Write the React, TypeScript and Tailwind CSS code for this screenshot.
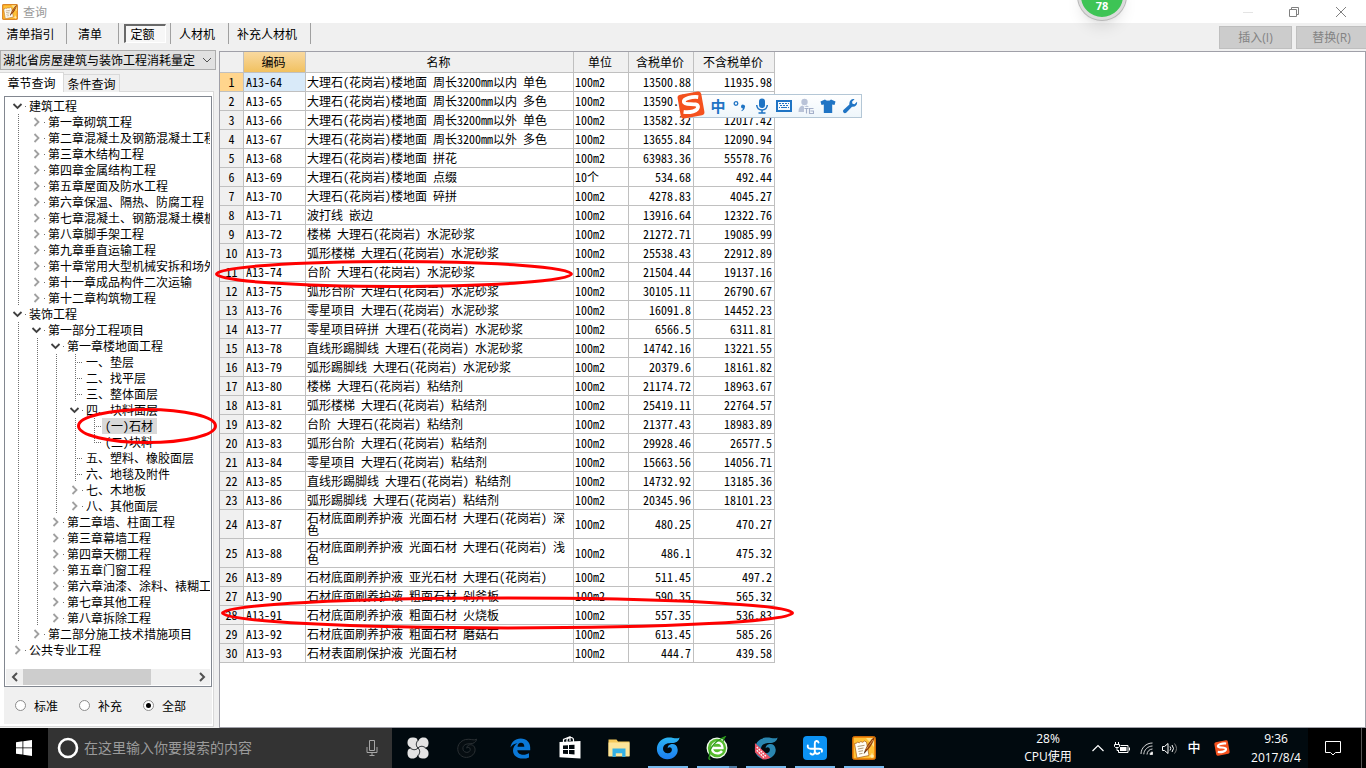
import { useState, type ReactNode } from "react";
import clsx from "clsx";

const SONG = "font-['Noto_Sans_Mono_CJK_SC','Noto_Sans_CJK_SC',sans-serif]";
const UI = "font-['Open_Sans','Noto_Sans_CJK_SC',sans-serif]";

interface TreeNode {
  label: string;
  leaf?: boolean;
  children?: TreeNode[];
}

const leaf = (label: string): TreeNode => ({ label, leaf: true });
const closed = (label: string): TreeNode => ({ label });

const TREE: TreeNode[] = [
  {
    label: "建筑工程",
    children: [
      closed("第一章砌筑工程"),
      closed("第二章混凝土及钢筋混凝土工程"),
      closed("第三章木结构工程"),
      closed("第四章金属结构工程"),
      closed("第五章屋面及防水工程"),
      closed("第六章保温、隔热、防腐工程"),
      closed("第七章混凝土、钢筋混凝土模板"),
      closed("第八章脚手架工程"),
      closed("第九章垂直运输工程"),
      closed("第十章常用大型机械安拆和场外运输"),
      closed("第十一章成品构件二次运输"),
      closed("第十二章构筑物工程"),
    ],
  },
  {
    label: "装饰工程",
    children: [
      {
        label: "第一部分工程项目",
        children: [
          {
            label: "第一章楼地面工程",
            children: [
              leaf("一、垫层"),
              leaf("二、找平层"),
              leaf("三、整体面层"),
              { label: "四、块料面层", children: [leaf("(一)石材"), leaf("(二)块料")] },
              leaf("五、塑料、橡胶面层"),
              leaf("六、地毯及附件"),
              closed("七、木地板"),
              closed("八、其他面层"),
            ],
          },
          closed("第二章墙、柱面工程"),
          closed("第三章幕墙工程"),
          closed("第四章天棚工程"),
          closed("第五章门窗工程"),
          closed("第六章油漆、涂料、裱糊工程"),
          closed("第七章其他工程"),
          closed("第八章拆除工程"),
        ],
      },
      closed("第二部分施工技术措施项目"),
    ],
  },
  closed("公共专业工程"),
];

const ROWS: [string, string, string, string, string][] = [
  ["A13-64", "大理石(花岗岩)楼地面 周长3200mm以内 单色", "100m2", "13500.88", "11935.98"],
  ["A13-65", "大理石(花岗岩)楼地面 周长3200mm以内 多色", "100m2", "13590.88", "12025.98"],
  ["A13-66", "大理石(花岗岩)楼地面 周长3200mm以外 单色", "100m2", "13582.32", "12017.42"],
  ["A13-67", "大理石(花岗岩)楼地面 周长3200mm以外 多色", "100m2", "13655.84", "12090.94"],
  ["A13-68", "大理石(花岗岩)楼地面 拼花", "100m2", "63983.36", "55578.76"],
  ["A13-69", "大理石(花岗岩)楼地面 点缀", "10个", "534.68", "492.44"],
  ["A13-70", "大理石(花岗岩)楼地面 碎拼", "100m2", "4278.83", "4045.27"],
  ["A13-71", "波打线 嵌边", "100m2", "13916.64", "12322.76"],
  ["A13-72", "楼梯 大理石(花岗岩) 水泥砂浆", "100m2", "21272.71", "19085.99"],
  ["A13-73", "弧形楼梯 大理石(花岗岩) 水泥砂浆", "100m2", "25538.43", "22912.89"],
  ["A13-74", "台阶 大理石(花岗岩) 水泥砂浆", "100m2", "21504.44", "19137.16"],
  ["A13-75", "弧形台阶 大理石(花岗岩) 水泥砂浆", "100m2", "30105.11", "26790.67"],
  ["A13-76", "零星项目 大理石(花岗岩) 水泥砂浆", "100m2", "16091.8", "14452.23"],
  ["A13-77", "零星项目碎拼 大理石(花岗岩) 水泥砂浆", "100m2", "6566.5", "6311.81"],
  ["A13-78", "直线形踢脚线 大理石(花岗岩) 水泥砂浆", "100m2", "14742.16", "13221.55"],
  ["A13-79", "弧形踢脚线 大理石(花岗岩) 水泥砂浆", "100m2", "20379.6", "18161.82"],
  ["A13-80", "楼梯 大理石(花岗岩) 粘结剂", "100m2", "21174.72", "18963.67"],
  ["A13-81", "弧形楼梯 大理石(花岗岩) 粘结剂", "100m2", "25419.11", "22764.57"],
  ["A13-82", "台阶 大理石(花岗岩) 粘结剂", "100m2", "21377.43", "18983.89"],
  ["A13-83", "弧形台阶 大理石(花岗岩) 粘结剂", "100m2", "29928.46", "26577.5"],
  ["A13-84", "零星项目 大理石(花岗岩) 粘结剂", "100m2", "15663.56", "14056.71"],
  ["A13-85", "直线形踢脚线 大理石(花岗岩) 粘结剂", "100m2", "14732.92", "13185.36"],
  ["A13-86", "弧形踢脚线 大理石(花岗岩) 粘结剂", "100m2", "20345.96", "18101.23"],
  ["A13-87", "石材底面刷养护液 光面石材 大理石(花岗岩) 深色", "100m2", "480.25", "470.27"],
  ["A13-88", "石材底面刷养护液 光面石材 大理石(花岗岩) 浅色", "100m2", "486.1", "475.32"],
  ["A13-89", "石材底面刷养护液 亚光石材 大理石(花岗岩)", "100m2", "511.45", "497.2"],
  ["A13-90", "石材底面刷养护液 粗面石材 剁斧板", "100m2", "590.35", "565.32"],
  ["A13-91", "石材底面刷养护液 粗面石材 火烧板", "100m2", "557.35", "536.83"],
  ["A13-92", "石材底面刷养护液 粗面石材 磨菇石", "100m2", "613.45", "585.26"],
  ["A13-93", "石材表面刷保护液 光面石材", "100m2", "444.7", "439.58"],
];

function NoteIcon({ className }: { className: string }) {
  return (
    <svg viewBox="0 0 24 24" className={className} aria-hidden="true">
      <rect x="0.5" y="0.5" width="23" height="23" rx="2" fill="#f08c0e" stroke="#c9690a" />
      <path d="M2 2h20v20H2z" fill="#ffc238" />
      <path d="M14 2h8v9z" fill="#ffe28a" />
      <path d="M2.500 7.500l2-.3 1-1.200 1.800.8 1.500-1.300 1.800.8L12.500 5l2 1 2.500 13.500L5 22z" fill="#fffdf4" stroke="#a4560f" strokeWidth="0.700" />
      <path d="M5.500 10.500l7-1.200M6 13l5.500-1M6.500 15.500l4.500-.8M7 18l3.500-.6" stroke="#a78d6a" strokeWidth="0.900" />
      <path d="M22.500 1C19 3 14.500 10 12.800 14.500l1.400 1C18 12 22 6 22.500 1z" fill="#8f3d0b" />
      <path d="M21 4c-2.500 3.500-4.500 6-6.500 9" stroke="#e7a04e" strokeWidth="0.900" />
      <path d="M12.800 14.500l-1.200 3.800 2.600-2.800z" fill="#4a1f05" />
      <path d="M17.500 20h4.500M20 17.500v4.500" stroke="#fff5cc" />
    </svg>
  );
}

function SogouMark({ className }: { className: string }) {
  return (
    <svg viewBox="0 0 28 28" className={className} aria-hidden="true">
      <g transform="rotate(-10 14 14)">
        <rect x="2" y="2" width="24" height="24" rx="3" fill="#f4511e" />
        <path
          d="M22.500 7.500C17 5.800 7.500 6 7.500 9.800 7.500 14 20.800 12 20.600 16.800 20.400 21.500 11 21.300 5.500 19.500"
          fill="none"
          stroke="#fff"
          strokeWidth="3.800"
        />
      </g>
    </svg>
  );
}

const SWIRL =
  "M25.500 1.500C22 4 17 .5 11 2 4.500 3.500.5 9 1 15c.4 6 5.500 10.500 11.500 10.200C19 25 24 20 23.500 14.500 23 10 19.500 8 16 9c-2.500.7-3.500 2.500-3.300 4.200 1.300-1.700 4.300-1.200 4.500 1.300.2 2.500-2 4.500-4.800 4.200C9 18.400 7 15.500 7.800 12.200 9 8 13.500 7.500 17 7.500c4.500 0 8-2 8.500-6z";

function Expander({ open }: { open: boolean }) {
  return open ? (
    <path d="M6.500 6l4 4 4-4" fill="none" stroke="#404040" strokeWidth="1.800" />
  ) : (
    <path d="M8.500 4l4 4-4 4" fill="none" stroke="#a0a0a0" strokeWidth="1.800" />
  );
}

interface BranchProps {
  nodes: TreeNode[];
  guides: boolean[];
  selected: string;
  onSelect: (label: string) => void;
}

function Branch({ nodes, guides, selected, onSelect }: BranchProps) {
  return (
    <ul>
      {nodes.map((node, index) => {
        const last = index === nodes.length - 1;
        return (
          <li key={node.label}>
            <div className="flex h-4 items-center">
              {guides.map((shown, level) => (
                <svg key={level} className="h-4 w-[19px] shrink-0" aria-hidden="true">
                  {shown && <path d="M11.500 0v16" stroke="#707070" strokeDasharray="1 1" />}
                </svg>
              ))}
              <svg className="h-4 w-[19px] shrink-0" aria-hidden="true">
                {node.leaf ? (
                  <path
                    d={last ? "M11.500 0v8M11 8.500h9" : "M11.500 0v16M11 8.500h9"}
                    fill="none"
                    stroke="#707070"
                    strokeDasharray="1 1"
                  />
                ) : (
                  <>
                    <Expander open={!!node.children} />
                    <rect x="18" y="8" width="1" height="1" fill="#707070" />
                  </>
                )}
              </svg>
              <button
                type="button"
                onClick={() => onSelect(node.label)}
                className={clsx(
                  "h-4 shrink-0 pr-1 pl-[3px] leading-4 whitespace-nowrap",
                  node.label === selected && "bg-[#d9d9d9]",
                )}
              >
                {node.label}
              </button>
            </div>
            {node.children && (
              <Branch nodes={node.children} guides={[...guides, !last]} selected={selected} onSelect={onSelect} />
            )}
          </li>
        );
      })}
    </ul>
  );
}

function TitleBar() {
  return (
    <header className="flex h-[23px] items-center bg-white pl-0.5">
      <NoteIcon className="size-4" />
      <h1 className="ml-[5px] flex-1 text-xs text-[#999]">查询</h1>
      <div className="flex h-full items-center pr-px">
        <button type="button" aria-label="最小化" className="flex w-[46px] justify-center">
          <svg className="size-3" viewBox="0 0 12 12"><path d="M1 6.500h10" stroke="#e4e4e4" /></svg>
        </button>
        <button type="button" aria-label="还原" className="flex w-[46px] justify-center">
          <svg className="size-3" viewBox="0 0 12 12" fill="none" stroke="#808080">
            <path d="M1.500 3.500h7v7h-7zM3.500 3V1.500h7v7H9" />
          </svg>
        </button>
        <button type="button" aria-label="关闭" className="flex w-12 justify-center">
          <svg className="size-3" viewBox="0 0 12 12"><path d="M1 1l10 10M11 1L1 11" stroke="#808080" /></svg>
        </button>
      </div>
    </header>
  );
}

const MODES = [
  { label: "清单指引", width: "w-[67px]" },
  { label: "清单", width: "w-[52px]" },
  { label: "定额", width: "w-[52px]" },
  { label: "人材机", width: "w-[58px]" },
  { label: "补充人材机", width: "w-[82px]" },
];

function Toolbar() {
  const [mode, setMode] = useState("定额");
  return (
    <div className="flex h-[27px] justify-between">
      <nav className="flex h-[21px]">
        {MODES.map(({ label, width }) => (
          <div key={label} className={clsx("flex items-stretch justify-center border-r border-[#a0a0a0]", width)}>
            <button
              type="button"
              onClick={() => setMode(label)}
              className={clsx(
                "pr-[5px] whitespace-nowrap",
                mode === label &&
                  "my-px w-[42px] border-t-2 border-r border-b border-l-2 border-t-[#696969] border-r-white border-b-white border-l-[#696969] bg-[#f7f7f7]",
              )}
            >
              {label}
            </button>
          </div>
        ))}
      </nav>
      <div className="mt-[3px] flex h-[23px] gap-1 text-[#838383]">
        <button type="button" disabled className="w-[73px] border border-[#bfbfbf] bg-[#ccc]">
          插入<span className="font-['Open_Sans',sans-serif]">(I)</span>
        </button>
        <button type="button" disabled className="w-[70px] border border-r-0 border-[#bfbfbf] bg-[#ccc]">
          替换<span className="font-['Open_Sans',sans-serif]">(R)</span>
        </button>
      </div>
    </div>
  );
}

function Sidebar() {
  const [selected, setSelected] = useState("(一)石材");
  const [scope, setScope] = useState("全部");
  return (
    <aside className="flex w-[219px] shrink-0 flex-col pr-[3px]">
      <div className="relative h-5">
        <select
          aria-label="定额库"
          className="h-5 w-full appearance-none border border-[#adadad] bg-[#e1e1e1] pr-5 pl-[2px] leading-[18px]"
        >
          <option>湖北省房屋建筑与装饰工程消耗量定</option>
        </select>
        <svg className="pointer-events-none absolute top-1.5 right-1 h-2 w-2.5" viewBox="0 0 10 8">
          <path d="M1 2l4 4 4-4" fill="none" stroke="#505050" />
        </svg>
      </div>
      <div role="tablist" className="mt-0.5 flex h-5 items-end">
        <button type="button" role="tab" aria-selected="true" className="h-full w-16 border-t border-r border-[#d9d9d9] bg-white">
          章节查询
        </button>
        <button type="button" role="tab" aria-selected="false" className="h-[18px] w-14 border-t border-r border-[#d9d9d9]">
          条件查询
        </button>
        <div className="mr-0.5 flex-1 self-stretch border-b border-[#d9d9d9]" />
      </div>
      <div className="mr-0.5 mb-px flex min-h-0 flex-1 flex-col border-r border-b border-[#d9d9d9] bg-white px-px pt-1 pb-0.5">
        <div className="ml-[3px] flex flex-1 flex-col overflow-hidden border border-[#828790] bg-white p-px">
          <div className="flex-1 overflow-hidden pl-px">
            <Branch nodes={TREE} guides={[]} selected={selected} onSelect={setSelected} />
          </div>
          <div className="flex h-4 items-center bg-[#f0f0f0]">
            <button type="button" aria-label="向左滚动" className="flex w-[17px] justify-center">
              <svg className="size-2.5" viewBox="0 0 10 10">
                <path d="M7 1L3 5l4 4" fill="none" stroke="#505050" strokeWidth="2" />
              </svg>
            </button>
            <div className="h-full flex-1">
              <div className="h-full w-3/4 bg-[#cdcdcd]" />
            </div>
            <button type="button" aria-label="向右滚动" className="flex w-[17px] justify-center">
              <svg className="size-2.5" viewBox="0 0 10 10">
                <path d="M3 1l4 4-4 4" fill="none" stroke="#505050" strokeWidth="2" />
              </svg>
            </button>
          </div>
        </div>
        <div className="ml-[3px] flex h-[37px] items-center bg-[#f0f0f0] pl-[11px]">
          {["标准", "补充", "全部"].map((item) => (
            <label key={item} className="flex w-16 items-center gap-2">
              <input
                type="radio"
                name="scope"
                checked={scope === item}
                onChange={() => setScope(item)}
                className="grid size-[11px] appearance-none place-content-center rounded-full border border-[#8c8c8c] bg-white before:size-[5px] before:rounded-full checked:before:bg-black"
              />
              {item}
            </label>
          ))}
        </div>
      </div>
    </aside>
  );
}

const CELL = "border-r border-b border-[#c0c0c0] leading-3";

function QuotaTable() {
  return (
    <table className="w-[555px] table-fixed border-separate border-spacing-0">
      <colgroup>
        <col className="w-6" />
        <col className="w-[62px]" />
        <col className="w-[268px]" />
        <col className="w-[55px]" />
        <col className="w-[65px]" />
        <col className="w-[81px]" />
      </colgroup>
      <thead>
        <tr className="h-[21px] bg-[#f0f0f0]">
          <th className={CELL} aria-label="序号" />
          <th className={clsx(CELL, "bg-linear-to-b from-[#f9d99f] to-[#f1c15f] pr-0.5 font-normal")}>编码</th>
          <th className={clsx(CELL, "pr-0.5 font-normal")}>名称</th>
          <th className={clsx(CELL, "pr-0.5 font-normal")}>单位</th>
          <th className={clsx(CELL, "pr-0.5 font-normal")}>含税单价</th>
          <th className={clsx(CELL, "pr-0.5 font-normal")}>不含税单价</th>
        </tr>
      </thead>
      <tbody>
        {ROWS.map(([code, name, unit, taxed, untaxed], index) => (
          <tr key={code} className="h-[19px]">
            <th className={clsx(CELL, "font-normal", index === 0 ? "bg-[#ffd58d]" : "bg-[#f0f0f0]")}>{index + 1}</th>
            <td className={clsx(CELL, "pl-0.5", index === 0 && "bg-[#d9eaf9]")}>{code}</td>
            <td className={clsx(CELL, "py-0.5 pl-px")}>{name}</td>
            <td className={clsx(CELL, "pl-px")}>{unit}</td>
            <td className={clsx(CELL, "pr-0.5 text-right")}>{taxed}</td>
            <td className={clsx(CELL, "pr-0.5 text-right")}>{untaxed}</td>
          </tr>
        ))}
      </tbody>
    </table>
  );
}

function ImeBar() {
  return (
    <div className="absolute top-[94px] left-[682px] flex h-6 w-[180px] items-center border border-[#b4c7d6] bg-linear-to-b from-white to-[#eef6fb] pl-[24px] text-[#1f74c4]">
      <SogouMark className="absolute -top-[4px] -left-[6px] size-7" />
      <button type="button" className="w-[22px] text-[15px] leading-5 font-bold">中</button>
      <button type="button" aria-label="标点" className="flex w-[22px] justify-center">
        <svg className="size-4" viewBox="0 0 16 16">
          <circle cx="4" cy="5.500" r="1.800" fill="none" stroke="currentColor" strokeWidth="1.300" />
          <path d="M9 8.500a2 2 0 1 1 3.800 1c-.3 1.800-1.300 3-3 3.700l-.4-.9c1-.5 1.500-1.100 1.600-1.900A1.900 1.900 0 0 1 9 8.500z" fill="currentColor" />
        </svg>
      </button>
      <button type="button" aria-label="语音" className="flex w-[22px] justify-center">
        <svg className="size-4" viewBox="0 0 16 16">
          <rect x="5" y="0.500" width="6" height="9.500" rx="3" fill="currentColor" />
          <path d="M2.700 7c.3 3.300 2.500 5 5.300 5s5-1.700 5.300-5M8 12v3M4.500 15h7" fill="none" stroke="currentColor" strokeWidth="1.500" />
        </svg>
      </button>
      <button type="button" aria-label="软键盘" className="flex w-[22px] justify-center">
        <svg className="size-4" viewBox="0 0 16 16" fill="none" stroke="currentColor">
          <rect x="1" y="3" width="14" height="10" strokeWidth="2" />
          <path d="M3 5.500h10M4 7.500h9" strokeDasharray="2 1" />
          <path d="M3 9.500h1M5 9.500h6M12 9.500h1" />
        </svg>
      </button>
      <button type="button" aria-label="账号" className="flex w-[22px] justify-center">
        <svg className="size-4" viewBox="0 0 16 16" fill="#b9c3d8">
          <circle cx="6.500" cy="4" r="3.200" />
          <path d="M0.500 14c0-4 1.500-6 4-6.500l2 1.500 2-1.500c1 .2 1.800.6 2.500 1.500H6v5z" />
          <path d="M6 9h10v7H6z" fill="#f6fafd" />
          <path d="M6.500 10.500h4M8.500 10.500V15.500M15.500 10.500h-4v5h4v-2.500h-3" fill="none" stroke="#a4b0ca" strokeWidth="1.200" />
        </svg>
      </button>
      <button type="button" aria-label="皮肤" className="flex w-[22px] justify-center">
        <svg className="size-4" viewBox="0 0 16 16" fill="currentColor">
          <path d="M5 1.500c1.500 1.600 4.500 1.600 6 0l4.500 2L14.500 7l-2.300-.5V15H3.800V6.500L1.500 7l-1-3.500z" />
        </svg>
      </button>
      <button type="button" aria-label="工具箱" className="flex w-[22px] justify-center">
        <svg className="size-4" viewBox="0 0 16 16" fill="currentColor">
          <path d="M12.500 1.200L10 3.700l.5 2 2 .5L15 3.800c.6 2.500-1.300 5.500-5 5l-5.800 6c-2 1.300-4-.8-2.800-2.700l6-5.700c-.5-3.500 2.300-5.900 5.100-5.200z" />
        </svg>
      </button>
    </div>
  );
}

function Annotations() {
  const ring = "absolute overflow-visible";
  return (
    <div className="pointer-events-none" aria-hidden="true">
      <svg className={clsx(ring, "top-[408px] left-[77px] h-9 w-[140px]")} viewBox="0 0 140 36">
        <ellipse cx="70" cy="18" rx="68.500" ry="16.500" fill="none" stroke="#f00" strokeWidth="3" />
      </svg>
      <svg className={clsx(ring, "top-[260px] left-[215px] h-7 w-[358px]")} viewBox="0 0 358 28">
        <ellipse cx="179" cy="14" rx="177.500" ry="12.500" fill="none" stroke="#f00" strokeWidth="3" />
      </svg>
      <svg className={clsx(ring, "top-[596px] left-[221px] h-[34px] w-[573px]")} viewBox="0 0 573 34">
        <ellipse cx="286.500" cy="17" rx="285" ry="15" fill="none" stroke="#f00" strokeWidth="3" />
      </svg>
    </div>
  );
}

interface TaskProps {
  name: string;
  running?: boolean;
  grouped?: boolean;
  children: ReactNode;
}

function Task({ name, running, grouped, children }: TaskProps) {
  return (
    <button type="button" aria-label={name} className="flex h-full w-[49px] flex-col items-center justify-end">
      <span className="flex flex-1 items-center">{children}</span>
      {running && (
        <span className="-mt-0.5 flex h-0.5 w-10 bg-[#76b9ed]">
          {grouped && <span className="ml-auto h-full w-2 bg-[#4f7ba3]" />}
        </span>
      )}
    </button>
  );
}

function Taskbar() {
  return (
    <footer className={clsx("flex h-10 shrink-0 items-stretch bg-[#010a0f] text-white", UI)}>
      <button type="button" aria-label="开始" className="flex w-12 items-center justify-center bg-black">
        <svg className="size-4" viewBox="0 0 16 16" fill="#fff">
          <path d="M0 2.200l6.500-.9v6.200H0zM7.300 1.200L16 0v7.500H7.300zM0 8.300h6.500v6.300L0 13.700zM7.300 8.300H16V16l-8.700-1.200z" />
        </svg>
      </button>
      <div className="flex w-[344px] items-center bg-[#333] pr-3.5 pl-[9px]">
        <svg className="size-[22px] shrink-0" viewBox="0 0 22 22">
          <circle cx="11" cy="11" r="9" fill="none" stroke="#fff" strokeWidth="2.600" />
        </svg>
        <input
          aria-label="搜索"
          placeholder="在这里输入你要搜索的内容"
          className="ml-[5px] min-w-0 flex-1 bg-transparent text-sm text-white outline-none placeholder:text-[#9b9b9b]"
        />
        <svg className="h-[18px] w-3 shrink-0" viewBox="0 0 12 18" fill="none" stroke="#a6a6a6">
          <path d="M3.500 1.500h5v10h-5zM1 8v5.500h10V8M6 13.500v3M3.500 16.500h5" />
        </svg>
      </div>
      <div className="ml-px flex">
        <Task name="浏览器">
          <svg className="size-[22px]" viewBox="0 0 22 22">
            {[0, 90, 180, 270].map((angle) => (
              <path
                key={angle}
                transform={`rotate(${angle} 11 11)`}
                d="M11.500 11.500V4.500C11 2 9 .5 6.500.5h-1C2.500.5.500 2.500.5 5v.8C.5 9 3 11 6 11.300z"
                fill="#e4e4e4"
              />
            ))}
            {[0, 90, 180, 270].map((angle) => (
              <path
                key={angle}
                transform={`rotate(${angle} 11 11)`}
                d="M11 11C8.800 9 8.800 6 10.800 3.500L11 0"
                fill="none"
                stroke="#10161a"
              />
            ))}
          </svg>
        </Task>
        <Task name="广联达">
          <svg className="size-5" viewBox="0 0 26 26">
            <path d={SWIRL} fill="#060d11" stroke="#2e3336" strokeWidth="1.200" />
          </svg>
        </Task>
      </div>
      <div className="ml-[5px] flex">
        <Task name="Edge">
          <svg className="size-[21px]" viewBox="0 0 21 21" fill="#0a78d7">
            <path d="M.5 9.500C1.200 4 5 .5 10.700.5c6 0 9.500 4.200 9.500 9v2.700H7.300c.3 3 2.900 4.500 6.100 4.500 2.200 0 4-.6 5.600-1.500v4.200c-1.800.8-3.800 1.200-6.300 1.200C7 20.600 3 17.200 3 12.500c0-3.200 1.800-5.700 4.500-7.200C4.300 5.500 2 7 .5 9.500zM7.500 8.700h6.800c0-2.500-1.200-4-3.300-4-2 0-3.200 1.600-3.500 4z" />
          </svg>
        </Task>
        <Task name="应用商店">
          <svg className="size-6" viewBox="0 0 24 24">
            <path d="M5.500 7V3.500L12 .8V5M9 6V3.500c2-3 6.500-2.500 6.500.5v2" fill="none" stroke="#fff" strokeWidth="1.200" />
            <path d="M1.500 6L22.500 5v17.500l-21-1.200z" fill="#fff" />
            <path d="M5 9.500l5-.3v3.900H5zM11 9.100l5.500-.3v4.300H11zM5 14.100h5V18l-5-.3zM11 14.100h5.500v4.300L11 18.100z" fill="#02090d" />
          </svg>
        </Task>
        <Task name="文件资源管理器">
          <svg className="h-5 w-[22px]" viewBox="0 0 22 20">
            <path d="M.5 1.500h8l1.500 2h11.500V18H.5z" fill="#f5c95b" />
            <path d="M.5 4.500h21v14H.5z" fill="#fde59a" />
            <path d="M4.500 10.500h13V19h-3.300v-3.800H7.800V19H4.500z" fill="#34b0e4" />
          </svg>
        </Task>
        <Task name="广联达计价" running>
          <svg className="size-6" viewBox="0 0 26 26">
            <linearGradient id="swirl-blue" x1="0" y1="0" x2="0" y2="1">
              <stop offset="0" stopColor="#2cb5f2" />
              <stop offset="1" stopColor="#1c7df0" />
            </linearGradient>
            <path d={SWIRL} fill="url(#swirl-blue)" />
          </svg>
        </Task>
        <Task name="安全浏览器" running grouped>
          <svg className="size-6" viewBox="0 0 24 24">
            <circle cx="12" cy="12" r="10.500" fill="#f2fbef" />
            <circle cx="12" cy="12" r="9.200" fill="#56bb2f" />
            <path d="M7 12h10.500c0-3.500-2.300-5.500-5.300-5.500S7 8.700 7 12s2.300 5.300 5.300 5.300c2 0 3.700-.8 4.700-2.300" fill="none" stroke="#fff" strokeWidth="2.300" />
            <path d="M5 20C3 16 7 6 20 .8c-1 1.500-2 2.200-1.500 4.700M5 20c-2 2-1 3.500.5 3.200" fill="none" stroke="#2c9a1c" strokeWidth="1.300" />
          </svg>
        </Task>
        <Task name="广联达算量" running>
          <svg className="size-6" viewBox="0 0 26 26">
            <path d={SWIRL} fill="#2a86b0" />
            <path d="M1 7.500l17 16-4.500 1.800-4 .2L1 17.500z" fill="#ee5264" />
            <path d="M3 12l10 10M3 15.500l8 8" stroke="#fff" strokeWidth="1.400" strokeDasharray="2 1" />
          </svg>
        </Task>
        <Task name="协同" running>
          <svg className="size-6" viewBox="0 0 24 24" fill="none" stroke="#fff">
            <rect width="24" height="24" rx="4" fill="#0c92f3" stroke="none" />
            <path
              d="M15.500 6.500c-.8-2.200-3.700-2-3.700.8v8.200c0 3-2.600 3.800-4.300 2M4.800 9.500c-.5 2 .8 3.200 3 3.200h8c2.700 0 3.800 1.200 3 3M11.800 15.500c.5 2.500 3 3 4.500 1.300"
              strokeWidth="1.900"
              strokeLinecap="round"
            />
          </svg>
        </Task>
        <Task name="查询" running>
          <NoteIcon className="size-6" />
        </Task>
      </div>
      <div className="ml-auto flex items-center text-xs">
        <div className="w-[60px] text-center leading-[18px]">
          <p>28%</p>
          <p>CPU使用</p>
        </div>
        <button type="button" aria-label="显示隐藏的图标" className="ml-2 flex w-6 justify-center">
          <svg className="h-2 w-3" viewBox="0 0 12 8"><path d="M.5 7L6 1.500 11.500 7" fill="none" stroke="#fff" strokeWidth="1.200" /></svg>
        </button>
        <button type="button" aria-label="电源" className="flex w-6 justify-center">
          <svg className="h-3 w-4" viewBox="0 0 16 12" fill="none" stroke="#fff">
            <path d="M6.500 3.500h7.500v7H4.500V8M1.500 0v2M4.500 0v2M.5 2.500h5v2l-1 1h-3l-1-1zM3 6v2.500h1M15.500 5.500v3" />
            <path d="M6 5h6.500v4H6z" fill="#fff" stroke="none" />
          </svg>
        </button>
        <button type="button" aria-label="网络" className="flex w-6 justify-center">
          <svg className="size-[13px]" viewBox="0 0 13 13" fill="none" stroke="#d8d8d8">
            <path d="M1 12C1 6 6 1 12.500 1M3.800 12.300C3.800 8 8 4 12.500 4M7 12.500C7 9.500 9.500 7 12.500 7" />
            <path d="M10 12.500c0-1.500 1-2.500 2.500-2.500v2.500z" fill="#fff" />
          </svg>
        </button>
        <button type="button" aria-label="音量" className="flex w-6 justify-center">
          <svg className="h-[13px] w-4" viewBox="0 0 16 13" fill="none" stroke="#fff">
            <path d="M.5 4.500h2L6 1.500v10l-3.500-3h-2zM8 4.500q1.500 2 0 4M10 3q3 3.500 0 7" />
            <path d="M12.500 1.500q4 5 0 10" stroke="#777" />
          </svg>
        </button>
        <button type="button" className="w-6 text-[13px] font-medium">中</button>
        <button type="button" aria-label="搜狗输入法" className="ml-1 flex w-6 justify-center">
          <SogouMark className="size-4" />
        </button>
        <time className="ml-2.5 w-16 text-center leading-[19px]">
          9:36
          <br />
          2017/8/4
        </time>
        <button type="button" aria-label="通知" className="flex h-full w-[54px] items-center justify-center border-r border-[#555] bg-black pr-1">
          <svg className="size-4" viewBox="0 0 16 16">
            <path d="M.5 1.500h15v11h-5L8 15l-2.500-2.500h-5z" fill="none" stroke="#fff" />
          </svg>
        </button>
        <div className="h-full w-1 bg-black" />
      </div>
    </footer>
  );
}

export default function App() {
  return (
    <div className={clsx("relative flex h-screen flex-col overflow-hidden bg-[#f0f0f0] text-xs text-black", SONG)}>
      <TitleBar />
      <Toolbar />
      <div className="flex min-h-0 flex-1">
        <Sidebar />
        <main className="mt-px min-w-0 flex-1 overflow-hidden border border-[#a0a0a8] bg-white">
          <QuotaTable />
        </main>
      </div>
      <Taskbar />
      <ImeBar />
      <Annotations />
      <div className="absolute -top-7 left-[1078px] flex size-12 items-end justify-center rounded-full border-3 border-[#dcdcdc] bg-[#3ec455] pb-1 font-['Open_Sans',sans-serif] text-[11px] leading-[14px] font-bold text-white shadow-lg ring-1 ring-[#b8b8b8]">
        78
      </div>
    </div>
  );
}
